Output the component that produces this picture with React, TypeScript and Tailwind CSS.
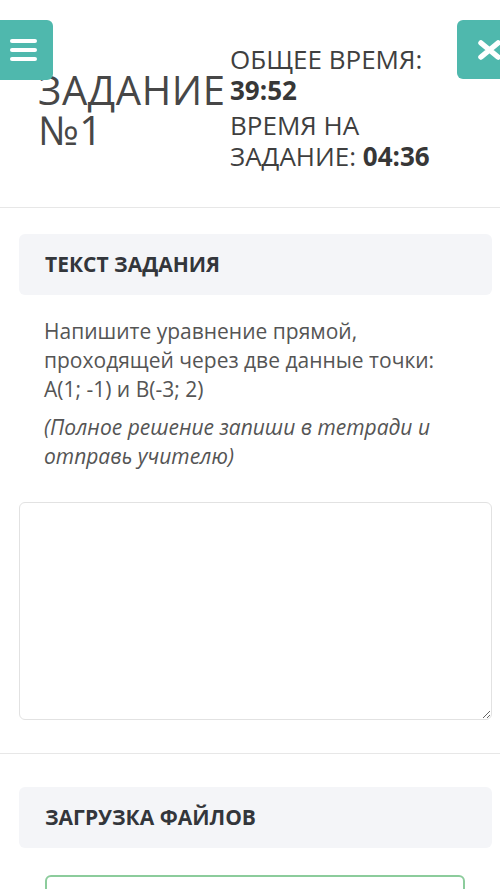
import React from "react";

export default function App() {
  return (
    <div
      className="relative w-full min-h-[889px] overflow-hidden bg-white"
      style={{ fontFamily: '"Open Sans", "Noto Sans", sans-serif' }}
    >
      {/* menu button */}
      <div className="absolute left-[-6px] top-[20px] w-[59px] h-[60px] rounded-[6px] bg-[#4fb8ad] flex flex-col items-center justify-center gap-[5px]">
        <span className="block w-[27px] h-[4px] rounded-full bg-white" />
        <span className="block w-[27px] h-[4px] rounded-full bg-white" />
        <span className="block w-[27px] h-[4px] rounded-full bg-white" />
      </div>
      {/* close button */}
      <div className="absolute left-[457px] top-[20px] w-[60px] h-[59px] rounded-[6px] bg-[#4fb8ad] flex items-center pl-[21px]">
        <svg width="23" height="20" viewBox="0 0 23 20">
          <path d="M3 3 L20 17 M20 3 L3 17" stroke="white" strokeWidth="5.5" strokeLinecap="round" fill="none" />
        </svg>
      </div>

      {/* header */}
      <div className="flex items-center pt-[44px] pb-[35px] border-b border-[#e7e7e7]">
        <div className="w-[230px] shrink-0 pl-[38px] mt-[4px] text-[40px] leading-[40px] tracking-[0.6px] text-[#474747] whitespace-nowrap">
          ЗАДАНИЕ
          <br />№1
        </div>
        <div className="text-[26px] leading-[31px] text-[#3f3f3f] whitespace-nowrap">
          <div>
            ОБЩЕЕ ВРЕМЯ:
            <br />
            <span className="font-bold text-[#373737]">39:52</span>
          </div>
          <div className="mt-[4px]">
            ВРЕМЯ НА
            <br />
            ЗАДАНИЕ: <span className="font-bold text-[#373737]">04:36</span>
          </div>
        </div>
      </div>

      {/* task section */}
      <div className="pl-[19px] pr-[8px] pt-[26px] pb-[33px] border-b border-[#e7e7e7]">
        <div className="h-[61px] rounded-[6px] bg-[#f4f5f8] flex items-center pl-[26px]">
          <span className="text-[21px] font-bold text-[#33363b]">ТЕКСТ ЗАДАНИЯ</span>
        </div>
        <div className="pl-[25px] pr-[10px] pt-[22px] text-[21px] leading-[29px] text-[#555555]">
          <p>
            Напишите уравнение прямой,
            <br />
            проходящей через две данные точки:
            <br />
            A(1; -1) и B(-3; 2)
          </p>
          <p className="mt-[9px] italic">
            (Полное решение запиши в тетради и
            <br />
            отправь учителю)
          </p>
        </div>
        <textarea className="mt-[31px] block w-full h-[218px] rounded-[6px] border border-[#e2e2e2] bg-white outline-none" />
      </div>

      {/* upload section */}
      <div className="pl-[19px] pr-[8px] pt-[33px]">
        <div className="h-[61px] rounded-[6px] bg-[#f4f5f8] flex items-center pl-[26px]">
          <span className="text-[21px] font-bold text-[#33363b]">ЗАГРУЗКА ФАЙЛОВ</span>
        </div>
        <div className="mt-[27px] ml-[26px] mr-[27px] h-[80px] rounded-[6px] border-2 border-[#8ccc9c]" />
      </div>
    </div>
  );
}
